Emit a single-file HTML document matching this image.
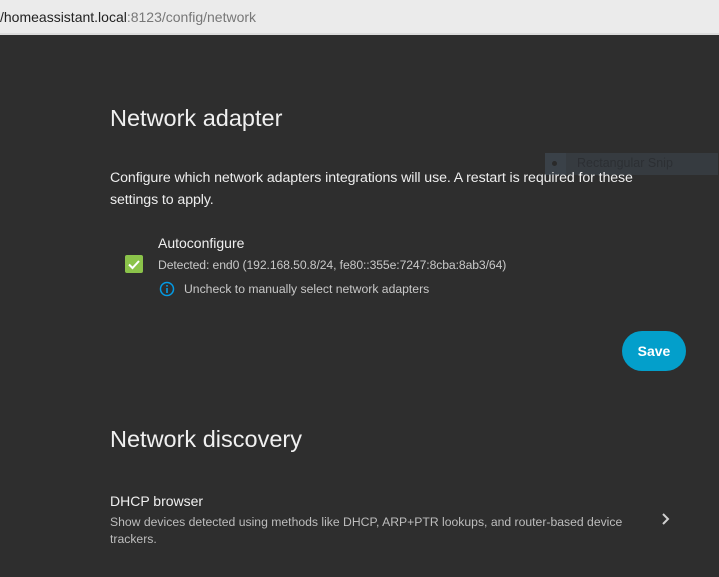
<!DOCTYPE html>
<html><head><style>
html,body{margin:0;padding:0;width:719px;height:577px;overflow:hidden;background:#2e2e2e;font-family:"Liberation Sans",Roboto,sans-serif;}
.bar{position:absolute;left:0;top:0;width:719px;height:33px;background:#ebebeb;border-bottom:2px solid #dcdcdc;}
.url{position:absolute;left:0;top:9px;font-size:14px;color:#777;}
.url b{font-weight:normal;color:#222;}
.t{position:absolute;color:#e1e1e1;white-space:nowrap;z-index:2;}
</style></head><body>
<div class="bar"><div class="url"><b>/homeassistant.local</b>:8123/config/network</div></div>
<div class="t" style="left:110px;top:105px;font-size:23.5px;color:#f0f0f0;">Network adapter</div>
<div style="position:absolute;left:545px;top:153px;width:173px;height:22px;background:#363b40;"></div>
<div style="position:absolute;left:545px;top:153px;width:21px;height:22px;background:#3a4148;"></div>
<div style="position:absolute;left:552px;top:161px;width:5px;height:5px;border-radius:50%;background:#2a2a2a;"></div>
<div style="position:absolute;left:577px;top:156px;font-size:12.5px;color:#2c2f33;">Rectangular Snip</div>
<div class="t" style="left:110px;top:167px;font-size:14.2px;line-height:22px;color:#ededed;letter-spacing:-0.1px;">Configure which network adapters integrations will use. A restart is required for these<br>settings to apply.</div>
<div class="t" style="left:158px;top:235px;font-size:14px;color:#f0f0f0;">Autoconfigure</div>
<div style="position:absolute;left:125px;top:255px;width:18px;height:18px;background:#8bc34a;border-radius:2px;"></div>
<svg style="position:absolute;left:125px;top:255px" width="18" height="18"><path d="M4 9.5l3.5 3.5L14 6" stroke="#fff" stroke-width="2" fill="none"/></svg>
<div class="t" style="left:158px;top:258px;font-size:12.2px;color:#c8c8c8;letter-spacing:-0.1px;">Detected: end0 (192.168.50.8/24, fe80::355e:7247:8cba:8ab3/64)</div>
<svg style="position:absolute;left:159px;top:281px" width="16" height="16"><circle cx="8" cy="8" r="6.5" stroke="#039be5" stroke-width="1.5" fill="none"/><rect x="7.2" y="7" width="1.6" height="5" fill="#039be5"/><rect x="7.2" y="4" width="1.6" height="1.6" fill="#039be5"/></svg>
<div class="t" style="left:184px;top:282px;font-size:12.2px;color:#c8c8c8;">Uncheck to manually select network adapters</div>
<div style="position:absolute;left:622px;top:331px;width:64px;height:40px;border-radius:20px;background:#039fcb;color:#fff;font-size:14px;font-weight:bold;text-align:center;line-height:40px;">Save</div>
<div class="t" style="left:110px;top:426px;font-size:23.5px;color:#f0f0f0;">Network discovery</div>
<div class="t" style="left:110px;top:493px;font-size:14px;color:#f0f0f0;">DHCP browser</div>
<div class="t" style="left:110px;top:514px;font-size:12.2px;line-height:17px;color:#bdbdbd;">Show devices detected using methods like DHCP, ARP+PTR lookups, and router-based device<br>trackers.</div>
<svg style="position:absolute;left:659px;top:511px" width="14" height="16"><path d="M4 3l5 5-5 5" stroke="#d0d0d0" stroke-width="2" fill="none"/></svg>
</body></html>
